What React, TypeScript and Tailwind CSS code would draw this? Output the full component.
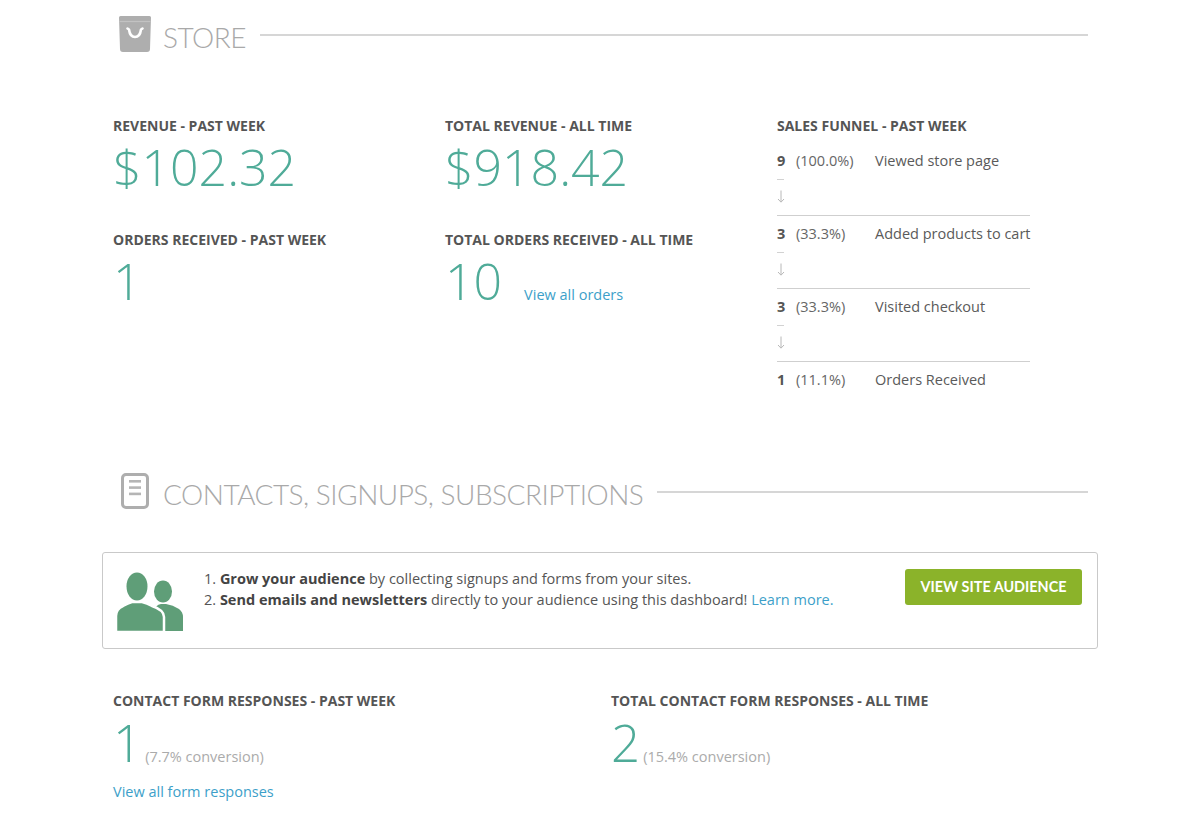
import type React from "react"

const teal = "text-[#4fab98]"

function BagIcon() {
  return (
    <svg width="36" height="36" viewBox="0 0 36 36">
      <path d="M2 1.5 Q2 0 3.5 0 H32.5 Q34 0 34 1.5 L33 33 Q33 36 30 36 H6 Q3 36 3 33 Z" fill="#aeaeae" />
      <path d="M2.5 5.5 H33.5" stroke="#c2c2c2" strokeWidth="1.2" />
      <path d="M10.5 12.5 L12 13.5 Q13 21 18 21 Q23 21 24 13.5 L25.5 12.5" stroke="#fff" strokeWidth="2.6" fill="none" strokeLinecap="round" strokeLinejoin="round" />
    </svg>
  )
}

function DocIcon() {
  return (
    <svg width="28" height="36" viewBox="0 0 28 36">
      <rect x="1.5" y="1.5" width="25" height="33" rx="3.5" fill="none" stroke="#aeaeae" strokeWidth="3" />
      <rect x="8" y="7" width="12" height="2.6" fill="#b5b5b5" />
      <rect x="8" y="13.3" width="12" height="2.6" fill="#b5b5b5" />
      <rect x="8" y="19.6" width="12" height="2.6" fill="#b5b5b5" />
    </svg>
  )
}

function PeopleIcon() {
  return (
    <svg width="66" height="60" viewBox="0 0 66 60">
      {/* back person */}
      <ellipse cx="46" cy="20.5" rx="9" ry="11" fill="#5f9e78" />
      <path d="M38 60 V40 Q38 34 44 33 H49 Q56 34 62 38 Q66 41 66 46 V60 Z" fill="#5f9e78" />
      {/* front person */}
      <g stroke="#fff" strokeWidth="2.5">
        <ellipse cx="20" cy="15.5" rx="10.5" ry="14" fill="#5f9e78" />
        <path d="M-1 61 V45 Q-1 38 6 35 Q11 32 15 31 H25 Q30 32 35 35 Q47 39 47 46 V61 Z" fill="#5f9e78" />
      </g>
      <ellipse cx="20" cy="15.5" rx="10.5" ry="14" fill="#5f9e78" />
    </svg>
  )
}

function DownArrow() {
  return (
    <svg width="8" height="13" viewBox="0 0 8 13">
      <path d="M4 0.5 V12 M1 9 L4 12.2 L7 9" stroke="#b8b8b8" strokeWidth="1" fill="none" />
    </svg>
  )
}

function SectionHeader({ icon, title }: { icon: React.ReactNode; title: string }) {
  return (
    <div className="flex items-center pl-[15px] pr-[10px]">
      <div className="w-[36px] flex justify-center">{icon}</div>
      <h2 className="ml-[10px] font-['Lato',sans-serif] font-light text-[28px] tracking-[-0.5px] leading-none text-[#a9a9a9] pt-[5px]">
        {title}
      </h2>
      <div className="flex-1 ml-[14px] h-[2px] bg-[#d6d6d6] mt-[2px]" />
    </div>
  )
}

function Label({ children }: { children: React.ReactNode }) {
  return <div className="text-[14px] font-bold leading-[18px] text-[#555]">{children}</div>
}

function BigNumber({ children }: { children: React.ReactNode }) {
  return <div className={`text-[50px] font-light leading-[50px] ${teal}`}>{children}</div>
}

const funnel = [
  { n: "9", pct: "(100.0%)", label: "Viewed store page" },
  { n: "3", pct: "(33.3%)", label: "Added products to cart" },
  { n: "3", pct: "(33.3%)", label: "Visited checkout" },
  { n: "1", pct: "(11.1%)", label: "Orders Received" },
]

export default function App() {
  return (
    <div className="min-h-screen bg-white font-['Open_Sans',sans-serif]">
      <div className="w-[996px] mx-auto pt-[16px] pb-[20px]">
        <SectionHeader icon={<BagIcon />} title="STORE" />

        <div className="grid grid-cols-[332px_332px_1fr] pl-[11px] mt-[65px]">
          <div>
            <Label>REVENUE - PAST WEEK</Label>
            <div className="mt-[7px]">
              <BigNumber>$102.32</BigNumber>
            </div>
            <div className="mt-[39px]">
              <Label>ORDERS RECEIVED - PAST WEEK</Label>
            </div>
            <div className="mt-[7px]">
              <BigNumber>1</BigNumber>
            </div>
          </div>

          <div>
            <Label>TOTAL REVENUE - ALL TIME</Label>
            <div className="mt-[7px]">
              <BigNumber>$918.42</BigNumber>
            </div>
            <div className="mt-[39px]">
              <Label>TOTAL ORDERS RECEIVED - ALL TIME</Label>
            </div>
            <div className="mt-[7px] flex items-baseline">
              <BigNumber>10</BigNumber>
              <a className="ml-[22px] text-[14.5px] text-[#3d9fc9]">View all orders</a>
            </div>
          </div>

          <div>
            <Label>SALES FUNNEL - PAST WEEK</Label>
            <div className="mt-[16px] w-[253px]">
              {funnel.map((row, i) => (
                <div key={i}>
                  <div className="flex whitespace-nowrap text-[14.5px] leading-[20px] text-[#666]">
                    <span className="w-[19px] shrink-0 font-bold text-[#555]">{row.n}</span>
                    <span className="w-[79px] shrink-0">{row.pct}</span>
                    <span className="text-[#5a5a5a]">{row.label}</span>
                  </div>
                  {i < funnel.length - 1 && (
                    <>
                      <div className="mt-[8px] w-[7px] h-px bg-[#d2d2d2]" />
                      <div className="mt-[10px] h-[14px] flex items-start">
                        <DownArrow />
                      </div>
                      <div className="mt-[11px] h-px bg-[#cfcfcf]" />
                      <div className="h-[8px]" />
                    </>
                  )}
                </div>
              ))}
            </div>
          </div>
        </div>

        <div className="mt-[83px]">
          <SectionHeader icon={<DocIcon />} title="CONTACTS, SIGNUPS, SUBSCRIPTIONS" />
        </div>

        <div className="mt-[43px] h-[97px] border border-[#c9c9c9] rounded-[3px] flex items-start pl-[14px] pr-[15px] pt-[16px]">
          <div className="mt-[2px]">
            <PeopleIcon />
          </div>
          <div className="ml-[21px] flex-1 text-[14.5px] leading-[21px] text-[#555] -mt-[1px]">
            <div>
              1. <b className="text-[#444]">Grow your audience</b> by collecting signups and forms from your sites.
            </div>
            <div>
              2. <b className="text-[#444]">Send emails and newsletters</b> directly to your audience using this dashboard!{" "}
              <a className="text-[#3d9fc9]">Learn more.</a>
            </div>
          </div>
          <button className="w-[177px] h-[36px] rounded-[3px] bg-[#8bb32a] text-white font-['Lato',sans-serif] font-bold text-[14.4px]">
            VIEW SITE AUDIENCE
          </button>
        </div>

        <div className="grid grid-cols-[498px_1fr] pl-[11px] mt-[43px]">
          <div>
            <Label>CONTACT FORM RESPONSES - PAST WEEK</Label>
            <div className="mt-[7px] flex items-baseline">
              <div className={`text-[51px] font-light leading-[50px] ${teal}`}>1</div>
              <span className="ml-[3px] text-[14.5px] text-[#ababab]">(7.7% conversion)</span>
            </div>
            <a className="block mt-[14px] text-[14.5px] leading-[20px] text-[#3d9fc9]">View all form responses</a>
          </div>
          <div>
            <Label>TOTAL CONTACT FORM RESPONSES - ALL TIME</Label>
            <div className="mt-[7px] flex items-baseline">
              <div className={`text-[51px] font-light leading-[50px] ${teal}`}>2</div>
              <span className="ml-[3px] text-[14.5px] text-[#ababab]">(15.4% conversion)</span>
            </div>
          </div>
        </div>
      </div>
    </div>
  )
}
